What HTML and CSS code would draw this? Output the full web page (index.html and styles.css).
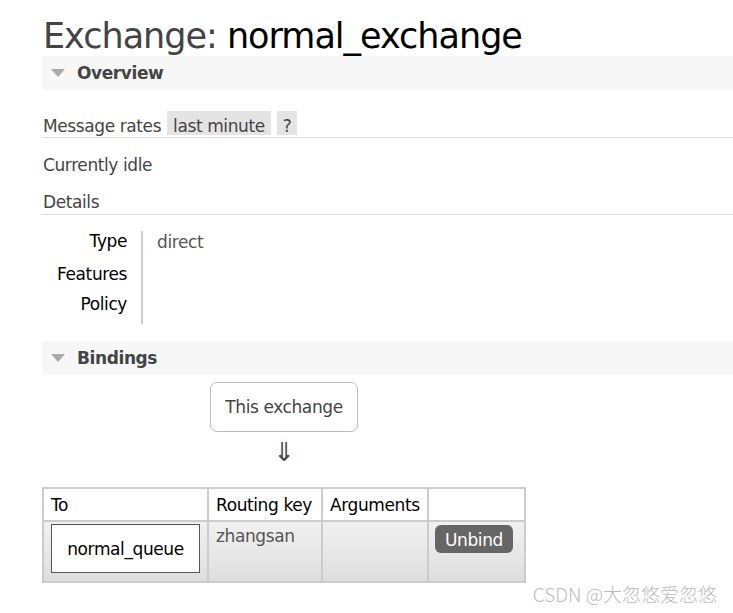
FILE: index.html
```html
<!DOCTYPE html>
<html lang="en">
<head>
    <meta charset="UTF-8">
    <title>Exchange: normal_exchange</title>
    <link rel="stylesheet" href="styles.css">
</head>
<body>
    <div class="main">
        <h1>Exchange: <b>normal_exchange</b></h1>

        <div class="section-head"><span class="tri"></span>Overview</div>

        <div class="rates">
            Message rates <span class="pill">last minute</span> <span class="pill">?</span>
        </div>
        <div class="idle">Currently idle</div>
        <div class="details-head">Details</div>

        <table class="facts">
            <tr class="r1"><th>Type</th><td>direct</td></tr>
            <tr class="r2"><th>Features</th><td></td></tr>
            <tr class="r3"><th>Policy</th><td></td></tr>
        </table>

        <div class="section-head bindings"><span class="tri"></span>Bindings</div>

        <div class="bind-wrap">
            <div class="this-box">This exchange</div>
            <div class="arrow">&#8659;</div>
            <table class="list">
                <tr>
                    <th class="c-to">To</th>
                    <th class="c-key">Routing key</th>
                    <th class="c-args">Arguments</th>
                    <th class="c-btn"></th>
                </tr>
                <tr class="row">
                    <td><span class="queue">normal_queue</span></td>
                    <td class="key">zhangsan</td>
                    <td></td>
                    <td><button>Unbind</button></td>
                </tr>
            </table>
        </div>
    </div>
    <div class="mark">CSDN @大忽悠爱忽悠</div>
</body>
</html>
```

FILE: styles.css
```css
body {
    margin: 0;
    font-family: "DejaVu Sans", Verdana, "Noto Sans CJK SC", sans-serif;
    font-size: 17px;
    letter-spacing: -0.4px;
    color: #444;
    background: #fff;
}

.main {
    padding-left: 42px;
}

h1 {
    margin: 16px 0 0 1px;
    font-size: 35px;
    line-height: 40px;
    font-weight: normal;
    letter-spacing: -1px;
    color: #444;
}
h1 b {
    font-weight: normal;
    color: #000;
}

.section-head {
    display: flex;
    align-items: center;
    height: 34px;
    background: #f7f7f7;
    font-weight: bold;
    color: #444;
}
.tri {
    width: 0;
    height: 0;
    margin: 0 12px 0 9px;
    border-left: 7px solid transparent;
    border-right: 7px solid transparent;
    border-top: 8px solid #aaa;
}

.rates {
    margin-top: 21px;
    padding: 0 0 2px 1px;
    border-bottom: 1px solid #ddd;
    line-height: 18px;
}
.pill {
    display: inline-block;
    margin-left: 1px;
    padding: 6px 6px 0;
    background: #e4e4e4;
}

.idle {
    padding: 15px 0 0 1px;
    line-height: 24px;
}

.details-head {
    padding: 13px 0 0 1px;
    line-height: 24px;
    border-bottom: 1px solid #ddd;
}

.facts {
    margin: 16px 0 0 0;
    border-collapse: collapse;
    line-height: 20px;
}
.facts th {
    width: 85px;
    padding: 0 14px 0 0;
    text-align: right;
    font-weight: normal;
    color: #000;
    vertical-align: top;
    border-right: 2px solid #ccc;
}
.facts td {
    padding: 1px 0 0 14px;
    vertical-align: top;
    color: #555;
}
.r1 th { height: 33px; }
.r2 th { height: 30px; }
.r3 th { height: 30px; }

.bindings {
    margin-top: 17px;
}

.bind-wrap {
    display: inline-flex;
    flex-direction: column;
    align-items: center;
    margin-top: 7px;
}

.this-box {
    padding: 2px 14px 0;
    height: 46px;
    line-height: 45px;
    border: 1px solid #bbb;
    border-radius: 7px;
    color: #444;
}

.arrow {
    font-size: 26px;
    line-height: 28px;
    margin: 6px 0 21px;
    color: #444;
}

.list {
    table-layout: fixed;
    border-collapse: separate;
    border-spacing: 0;
    border: 1px solid #ccc;
    color: #000;
}
.list th {
    height: 31px;
    padding: 0 7px;
    text-align: left;
    font-weight: normal;
    border: 1px solid #ccc;
    background: #fff;
}
.c-to { width: 149px; }
.c-key { width: 98px; }
.c-args { width: 90px; }
.c-btn { width: 81px; }
.list td {
    height: 55px;
    padding: 2px 7px 0;
    vertical-align: top;
    border: 1px solid #ccc;
    background: linear-gradient(#f1f1f1, #dedede);
}
.list td.key {
    padding-top: 4px;
    line-height: 20px;
    color: #555;
}
.queue {
    display: block;
    height: 47px;
    line-height: 49px;
    text-align: center;
    background: #fff;
    border: 1px solid #555;
}
button {
    margin: 1px 0 0 -1px;
    padding: 1px 10px 0;
    height: 28px;
    border: none;
    border-radius: 6px;
    background: #666;
    color: #fff;
    font-family: "DejaVu Sans", Verdana, sans-serif;
    font-size: 17px;
    letter-spacing: -0.4px;
}

.mark {
    position: absolute;
    right: 16px;
    bottom: 6px;
    font-family: "Noto Sans CJK SC", sans-serif;
    font-size: 19px;
    font-weight: 300;
    letter-spacing: 0;
    color: #bbb;
}
```
